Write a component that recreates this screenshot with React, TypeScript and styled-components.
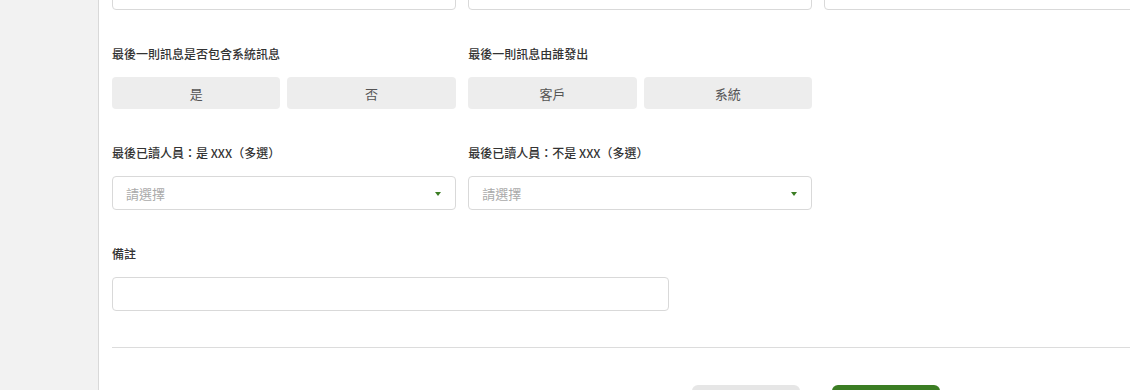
import * as React from 'react';
import styled, { createGlobalStyle } from 'styled-components';

const GlobalStyle = createGlobalStyle`
  html, body {
    margin: 0;
    padding: 0;
    height: 100%;
    overflow: hidden;
    background: #fff;
  }
  body {
    font-family: 'Noto Sans CJK TC', 'Noto Sans', sans-serif;
    color: #333;
  }
  * { box-sizing: border-box; }
`;

export default function App() {
  const [hasSystem, setHasSystem] = React.useState<string | null>(null);
  const [sender, setSender] = React.useState<string | null>(null);

  return (
    <>
      <GlobalStyle />
      <Layout>
        <Sidebar />
        <Main>
          <Form>
            <Row>
              <Field><TextInput /></Field>
              <Field><TextInput /></Field>
              <Field><TextInput /></Field>
            </Row>
            <Row>
              <Field>
                <Label>最後一則訊息是否包含系統訊息</Label>
                <ToggleGroup>
                  {['是', '否'].map((v) => (
                    <Toggle key={v} active={hasSystem === v} onClick={() => setHasSystem(v)}>{v}</Toggle>
                  ))}
                </ToggleGroup>
              </Field>
              <Field>
                <Label>最後一則訊息由誰發出</Label>
                <ToggleGroup>
                  {['客戶', '系統'].map((v) => (
                    <Toggle key={v} active={sender === v} onClick={() => setSender(v)}>{v}</Toggle>
                  ))}
                </ToggleGroup>
              </Field>
            </Row>
            <Row>
              <Field>
                <Label>最後已讀人員：是 XXX（多選）</Label>
                <Select>
                  <Placeholder>請選擇</Placeholder>
                  <Caret />
                </Select>
              </Field>
              <Field>
                <Label>最後已讀人員：不是 XXX（多選）</Label>
                <Select>
                  <Placeholder>請選擇</Placeholder>
                  <Caret />
                </Select>
              </Field>
            </Row>
            <Row>
              <Field wide>
                <Label>備註</Label>
                <TextInput />
              </Field>
            </Row>
            <Divider />
            <Actions>
              <ActionButton aria-label="取消" />
              <ActionButton aria-label="確認" primary />
            </Actions>
          </Form>
        </Main>
      </Layout>
    </>
  );
}

const Layout = styled.div`
  display: flex;
  height: 100vh;
`;
const Sidebar = styled.div`
  width: 99px;
  flex-shrink: 0;
  background-color: #f2f2f2;
  border-right: 1px solid #d9d9d9;
`;
const Main = styled.div`
  flex: 1;
  overflow: hidden;
  padding-left: 13px;
`;
const Form = styled.div`
  width: 1056px;
  margin-top: -24px;
`;
const Row = styled.div`
  display: flex;
  gap: 12.7px;
  margin-bottom: 36px;
`;
const Field = styled.div<{ wide?: boolean }>`
  width: ${(p) => (p.wide ? '557px' : '343.6px')};
  display: flex;
  flex-direction: column;
`;
const Label = styled.div`
  font-size: 12px;
  line-height: 16px;
  font-weight: 500;
  color: #333;
  margin-bottom: 15px;
`;
const TextInput = styled.div`
  height: 34px;
  border: 1px solid #d9d9d9;
  border-radius: 4px;
  background: #fff;
`;
const ToggleGroup = styled.div`
  display: flex;
  gap: 7px;
`;
const Toggle = styled.button<{ active?: boolean }>`
  flex: 1;
  height: 32px;
  border: none;
  border-radius: 4px;
  background-color: ${(p) => (p.active ? '#3b7d23' : '#ededed')};
  color: ${(p) => (p.active ? '#fff' : '#555')};
  font-family: inherit;
  font-size: 13px;
  cursor: pointer;
  padding: 0;
`;
const Select = styled.div`
  height: 34px;
  border: 1px solid #d9d9d9;
  border-radius: 4px;
  display: flex;
  align-items: center;
  justify-content: space-between;
  padding: 0 14px 0 13px;
  cursor: pointer;
`;
const Placeholder = styled.span`
  font-size: 13px;
  color: #aaa;
`;
const Caret = styled.span`
  width: 0;
  height: 0;
  border-left: 3.5px solid transparent;
  border-right: 3.5px solid transparent;
  border-top: 4px solid #3b7d23;
  margin-top: 1px;
`;
const Divider = styled.div`
  border-top: 1px solid #dcdcdc;
  margin-bottom: 37px;
`;
const Actions = styled.div`
  display: flex;
  gap: 32px;
  padding-left: 580px;
`;
const ActionButton = styled.button<{ primary?: boolean }>`
  width: 108px;
  height: 36px;
  border: none;
  border-radius: 6px;
  background-color: ${(p) => (p.primary ? '#3b7d23' : '#e6e6e6')};
  cursor: pointer;
`;
